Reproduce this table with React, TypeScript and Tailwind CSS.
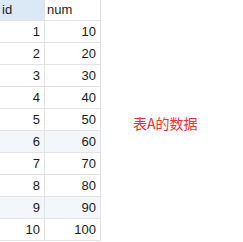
const rows = [1, 2, 3, 4, 5, 6, 7, 8, 9, 10].map((id) => ({ id, num: id * 10 }));

export default function App() {
  return (
    <div className="flex w-[243px] h-[242px] bg-white font-['Liberation_Sans','Noto_Sans_CJK_SC',sans-serif] text-[13px] text-[#1a1a1a]">
      <div className="w-[101px]">
        <div className="flex h-[21px] border-b border-[#e3e3e3]">
          <div className="w-[45px] border-r border-[#e3e3e3] bg-[#dbe9f7] pl-[2px] leading-[20px]">id</div>
          <div className="w-[56px] border-r border-[#e3e3e3] pl-[2px] leading-[20px]">num</div>
        </div>
        {rows.map((r) => (
          <div
            key={r.id}
            className={`flex h-[22px] border-b border-[#e3e3e3] ${
              r.id === 6 || r.id === 9 ? "bg-[#f3f7fc]" : ""
            }`}
          >
            <div className="w-[45px] border-r border-[#e3e3e3] pr-[4px] text-right leading-[21px]">{r.id}</div>
            <div className="w-[56px] border-r border-[#e3e3e3] pr-[4px] text-right leading-[21px]">{r.num}</div>
          </div>
        ))}
      </div>
      <div className="pl-[32px] pt-[113px] text-[14px] text-[#f03030] font-['Noto_Sans_CJK_SC',sans-serif]">
        表A的数据
      </div>
    </div>
  );
}
